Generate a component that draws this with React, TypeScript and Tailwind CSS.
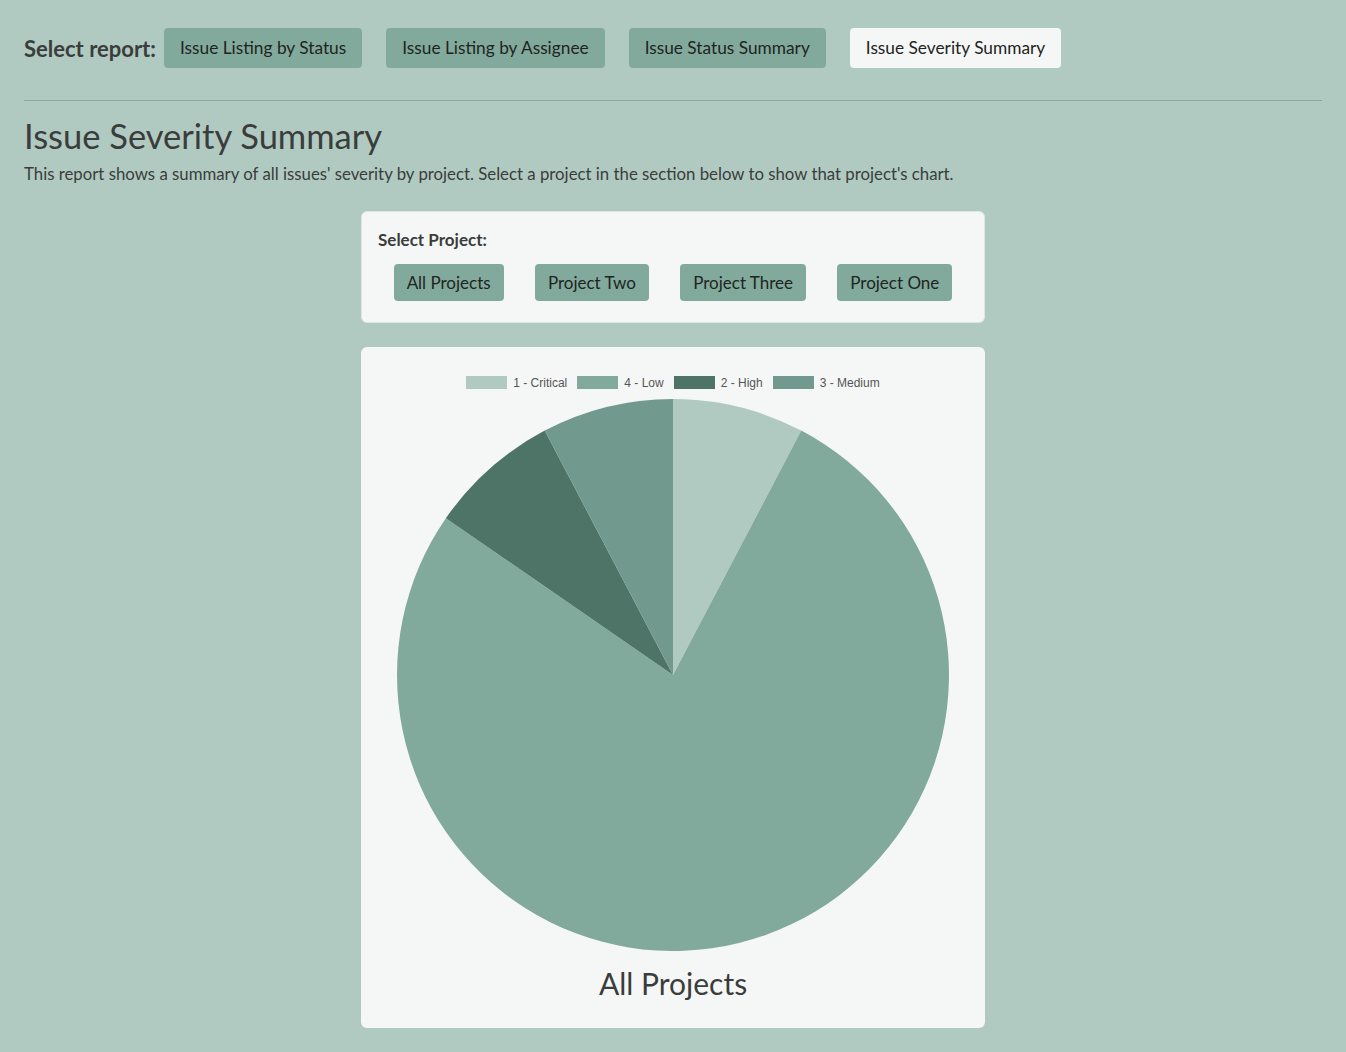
import React from "react";

const reports = [
  "Issue Listing by Status",
  "Issue Listing by Assignee",
  "Issue Status Summary",
  "Issue Severity Summary",
];

const projects = ["All Projects", "Project Two", "Project Three", "Project One"];

const slices = [
  { label: "1 - Critical", value: 1, color: "#b0cac1" },
  { label: "4 - Low", value: 10, color: "#82aa9c" },
  { label: "2 - High", value: 1, color: "#4d7466" },
  { label: "3 - Medium", value: 1, color: "#72998e" },
];

const PieChart = () => {
  const r = 276;
  const c = 276;
  const total = slices.reduce((s, x) => s + x.value, 0);
  let acc = 0;
  const pt = (a: number) => [c + r * Math.sin(a), c - r * Math.cos(a)];
  return (
    <svg width={552} height={552} viewBox="0 0 552 552">
      {slices.map((s) => {
        const a0 = (acc / total) * Math.PI * 2;
        acc += s.value;
        const a1 = (acc / total) * Math.PI * 2;
        const [x0, y0] = pt(a0);
        const [x1, y1] = pt(a1);
        const large = a1 - a0 > Math.PI ? 1 : 0;
        return (
          <path
            key={s.label}
            d={`M${c},${c} L${x0},${y0} A${r},${r} 0 ${large} 1 ${x1},${y1} Z`}
            fill={s.color}
          />
        );
      })}
    </svg>
  );
};

export default function App() {
  return (
    <div className="min-h-[1052px] bg-[#b0cac1] px-6 text-[#3a3d3b] font-['Lato',sans-serif]">
      <div className="flex items-center pt-7 pb-8 gap-6">
        <span className="text-[22px] font-bold -mr-4">Select report:</span>
        {reports.map((r, i) => (
          <button
            key={r}
            className={`h-10 px-4 rounded text-[17.3px] text-[#1f2421] ${
              i === 3 ? "bg-[#f5f7f6]" : "bg-[#82aa9c]"
            }`}
          >
            {r}
          </button>
        ))}
      </div>
      <hr className="border-t border-[#8fa69e]" />
      <h1 className="text-[34.5px] leading-[34px] mt-[18px]">Issue Severity Summary</h1>
      <p className="text-[16.8px] leading-[20px] mt-[11px]">
        This report shows a summary of all issues' severity by project. Select a project in the section below to show that project's chart.
      </p>

      <div className="flex flex-col items-center mt-[27px] gap-6">
        <div className="w-[624px] bg-[#f5f7f6] border border-[#dfe6e3] rounded-md px-4 pt-[19px] pb-[21px]">
          <div className="text-[17px] font-bold leading-[17px]">Select Project:</div>
          <div className="flex justify-around mt-[16px]">
            {projects.map((p) => (
              <button
                key={p}
                className="h-[37px] px-[13px] rounded bg-[#82aa9c] text-[17px] text-[#1f2421]"
              >
                {p}
              </button>
            ))}
          </div>
        </div>

        <div className="w-[624px] bg-[#f5f7f6] rounded-md flex flex-col items-center pt-[30px] pb-[30px]">
          <div className="flex items-center gap-[10px] text-[12px] text-[#555] font-['Liberation_Sans',sans-serif] h-[13px] -translate-y-px">
            {slices.map((s) => (
              <div key={s.label} className="flex items-center gap-[6px]">
                <span className="w-[41px] h-[13px] inline-block" style={{ background: s.color }} />
                <span>{s.label}</span>
              </div>
            ))}
          </div>
          <div className="mt-[9px] flex">
            <PieChart />
          </div>
          <div className="text-[30px] leading-[30px] mt-[17px]">All Projects</div>
        </div>
      </div>
    </div>
  );
}
